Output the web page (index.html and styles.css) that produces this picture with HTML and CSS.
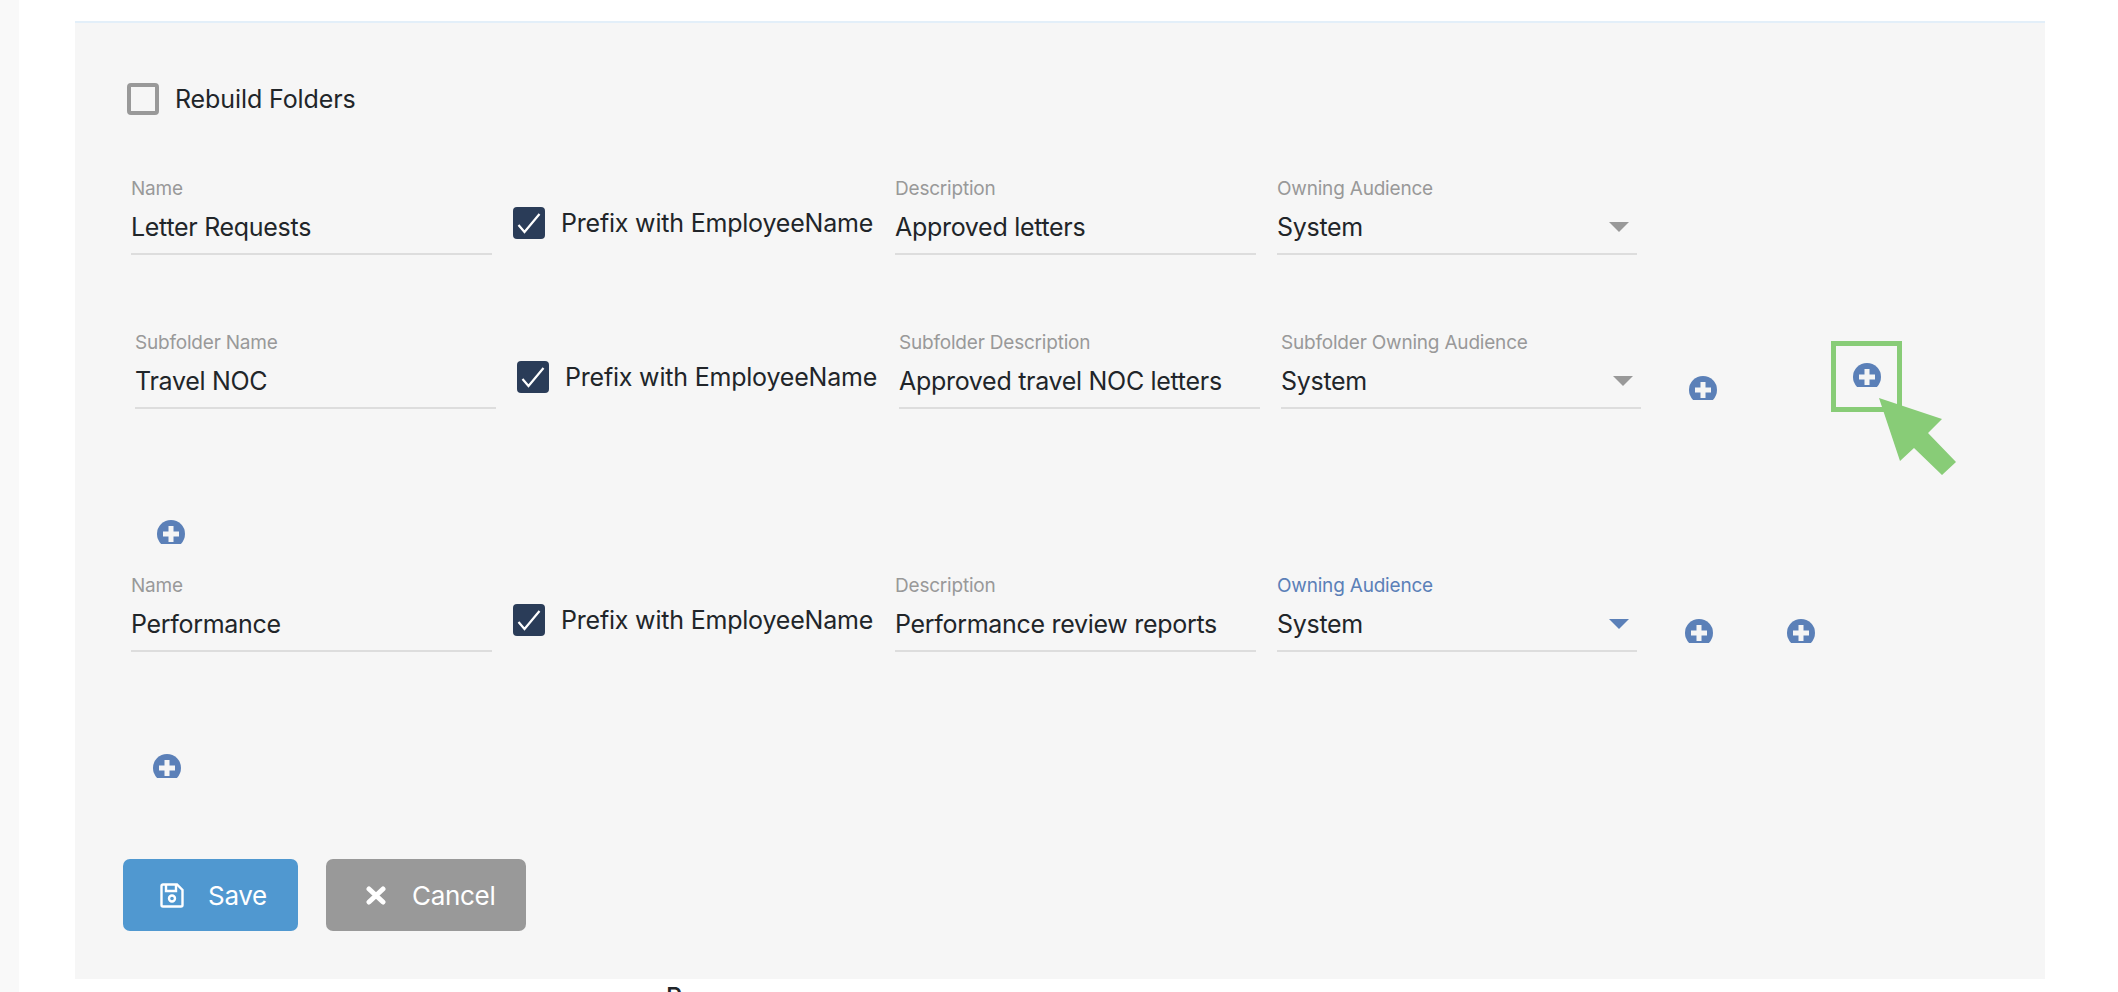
FILE: index.html
```html
<!DOCTYPE html>
<html lang="en">
<head>
<meta charset="utf-8">
<title>Folders</title>
<link rel="stylesheet" href="styles.css">
</head>
<body>
<div class="page">
  <div class="gutter"></div>
  <main class="panel">
    <label class="check rebuild"><span class="box"></span><span>Rebuild Folders</span></label>

    <div class="row row-main">
      <div class="field"><div class="lbl">Name</div><div class="val">Letter Requests</div></div>
      <label class="check prefix"><span class="box on"><svg viewBox="0 0 32 32"><path d="M5.500 18l6 7L26.500 7"/></svg></span><span>Prefix with EmployeeName</span></label>
      <div class="field"><div class="lbl">Description</div><div class="val">Approved letters</div></div>
      <div class="field select"><div class="lbl">Owning Audience</div><div class="val">System</div><i class="caret"></i></div>
    </div>

    <div class="row row-sub">
      <div class="field"><div class="lbl">Subfolder Name</div><div class="val">Travel NOC</div></div>
      <label class="check prefix"><span class="box on"><svg viewBox="0 0 32 32"><path d="M5.500 18l6 7L26.500 7"/></svg></span><span>Prefix with EmployeeName</span></label>
      <div class="field"><div class="lbl">Subfolder Description</div><div class="val">Approved travel NOC letters</div></div>
      <div class="field select"><div class="lbl">Subfolder Owning Audience</div><div class="val">System</div><i class="caret"></i></div>
      <span class="add add-a"><svg viewBox="0 0 28 28"><circle cx="14" cy="14" r="14"/><path d="M14 6v16M6 14h16"/></svg></span>
      <span class="add add-b"><svg viewBox="0 0 28 28"><circle cx="14" cy="14" r="14"/><path d="M14 6v16M6 14h16"/></svg></span>
    </div>

    <div class="add-row add-row-1"><span class="add"><svg viewBox="0 0 28 28"><circle cx="14" cy="14" r="14"/><path d="M14 6v16M6 14h16"/></svg></span></div>

    <div class="row row-third">
      <div class="field"><div class="lbl">Name</div><div class="val">Performance</div></div>
      <label class="check prefix"><span class="box on"><svg viewBox="0 0 32 32"><path d="M5.500 18l6 7L26.500 7"/></svg></span><span>Prefix with EmployeeName</span></label>
      <div class="field"><div class="lbl">Description</div><div class="val">Performance review reports</div></div>
      <div class="field select focused"><div class="lbl">Owning Audience</div><div class="val">System</div><i class="caret"></i></div>
      <span class="add add-c"><svg viewBox="0 0 28 28"><circle cx="14" cy="14" r="14"/><path d="M14 6v16M6 14h16"/></svg></span>
      <span class="add add-d"><svg viewBox="0 0 28 28"><circle cx="14" cy="14" r="14"/><path d="M14 6v16M6 14h16"/></svg></span>
    </div>

    <div class="add-row add-row-2"><span class="add"><svg viewBox="0 0 28 28"><circle cx="14" cy="14" r="14"/><path d="M14 6v16M6 14h16"/></svg></span></div>

    <div class="actions">
      <button class="btn save"><svg viewBox="0 0 24 25"><path d="M3 1.500h14l5.500 5.500v15a1.500 1.500 0 0 1-1.500 1.500H3A1.500 1.500 0 0 1 1.500 22V3A1.500 1.500 0 0 1 3 1.500z"/><path d="M6 1.500v6.500h10V1.500"/><circle cx="12" cy="15.500" r="3"/></svg><span>Save</span></button>
      <button class="btn cancel"><svg viewBox="0 0 20 19"><path d="M3 3l14 13M17 3L3 16"/></svg><span>Cancel</span></button>
    </div>

    <svg class="callout" viewBox="0 0 130 140">
      <rect x="2.500" y="2.500" width="66" height="66"/>
      <path d="M48 57l63 21-14 14 28 29-14 13-28-27-14 13z"/>
    </svg>
  </main>
  <div class="cut">P</div>
</div>
</body>
</html>
```
FILE: styles.css
```css
* { box-sizing: border-box; }
html, body { margin: 0; height: 100%; overflow: hidden; background: #fff; }
body { font-family: Inter, "Liberation Sans", sans-serif; color: #212529; }

.page { position: relative; height: 992px; overflow: hidden; padding-left: 75px; padding-top: 21px; }
.gutter { position: absolute; left: 0; top: 0; bottom: 0; width: 19px; background: #f9f9f9; }

.panel {
  position: relative;
  width: 1970px;
  height: 958px;
  background: #f6f6f6;
  border-top: 2px solid #e3eff9;
  padding: 60px 0 0 52px;
}

.check { display: flex; align-items: center; gap: 16px; font-size: 25px; letter-spacing: -0.1px; }
.box {
  flex: none; width: 32px; height: 32px;
  border: 4px solid #999; border-radius: 4px;
}
.box.on { background: #2a3c58; border: 0; display: flex; }
.box svg { width: 32px; height: 32px; }
.box path { fill: none; stroke: #fff; stroke-width: 2.200; }

.rebuild { height: 32px; }

.row { position: relative; display: flex; align-items: flex-start; height: 80px; }
.row-main { margin: 60px 0 0 4px; }
.row-sub { margin: 74px 0 0 8px; }
.row-third { margin: 0 0 0 4px; }

.field { position: relative; width: 361px; height: 80px; padding-top: 2px; border-bottom: 2px solid #ddd; flex: none; }
.lbl { font-size: 19px; line-height: 24px; color: #999; letter-spacing: -0.2px; }
.val { font-size: 25px; line-height: 30px; margin-top: 11px; letter-spacing: -0.3px; }
.caret {
  position: absolute; right: 8px; top: 47px;
  border-left: 10px solid transparent; border-right: 10px solid transparent;
  border-top: 10px solid #999;
}
.focused .lbl { color: #5b80b8; }
.focused .caret { border-top-color: #5b80b8; }

.prefix { width: 382px; margin: 32px 0 0 21px; flex: none; letter-spacing: -0.2px; }
.select { width: 360px; margin-left: 21px; }

.add { display: block; width: 28px; height: 24px; overflow: hidden; flex: none; }
.add svg { display: block; width: 28px; height: 28px; }
.add circle { fill: #5b80b8; }
.add path { stroke: #f5f5f5; stroke-width: 5; fill: none; }

.add-a { margin: 47px 0 0 48px; }
.add-b { margin: 34px 0 0 136px; }
.add-c { margin: 47px 0 0 48px; }
.add-d { margin: 47px 0 0 74px; }

.add-row { display: flex; }
.add-row-1 { margin: 111px 0 0 30px; }
.add-row-1 + .row { margin-top: 28px; }
.add-row-2 { margin: 102px 0 0 26px; }

.actions { display: flex; gap: 28px; margin: 81px 0 0 -4px; }
.btn {
  height: 72px; border: 0; border-radius: 7px; color: #fff;
  display: flex; align-items: center;
  font: 26px Inter, "Liberation Sans", sans-serif; letter-spacing: -0.3px;
}
.save { width: 175px; background: #5098d0; gap: 24px; padding: 0 0 0 37px; }
.cancel { width: 200px; background: #999; gap: 26px; padding: 0 0 0 40px; }
.save svg { flex: none; width: 24px; height: 25px; fill: none; stroke: #fff; stroke-width: 2.400; }
.cancel svg { flex: none; width: 20px; height: 19px; fill: none; stroke: #fff; stroke-width: 5; stroke-linecap: round; }

.callout { position: absolute; left: 1756px; top: 318px; width: 130px; height: 140px; }
.callout rect { fill: none; stroke: #88cc77; stroke-width: 5; }
.callout path { fill: #88cc77; }

.cut { position: absolute; left: 666px; top: 982px; font-size: 25px; line-height: 30px; font-weight: 500; }
```
